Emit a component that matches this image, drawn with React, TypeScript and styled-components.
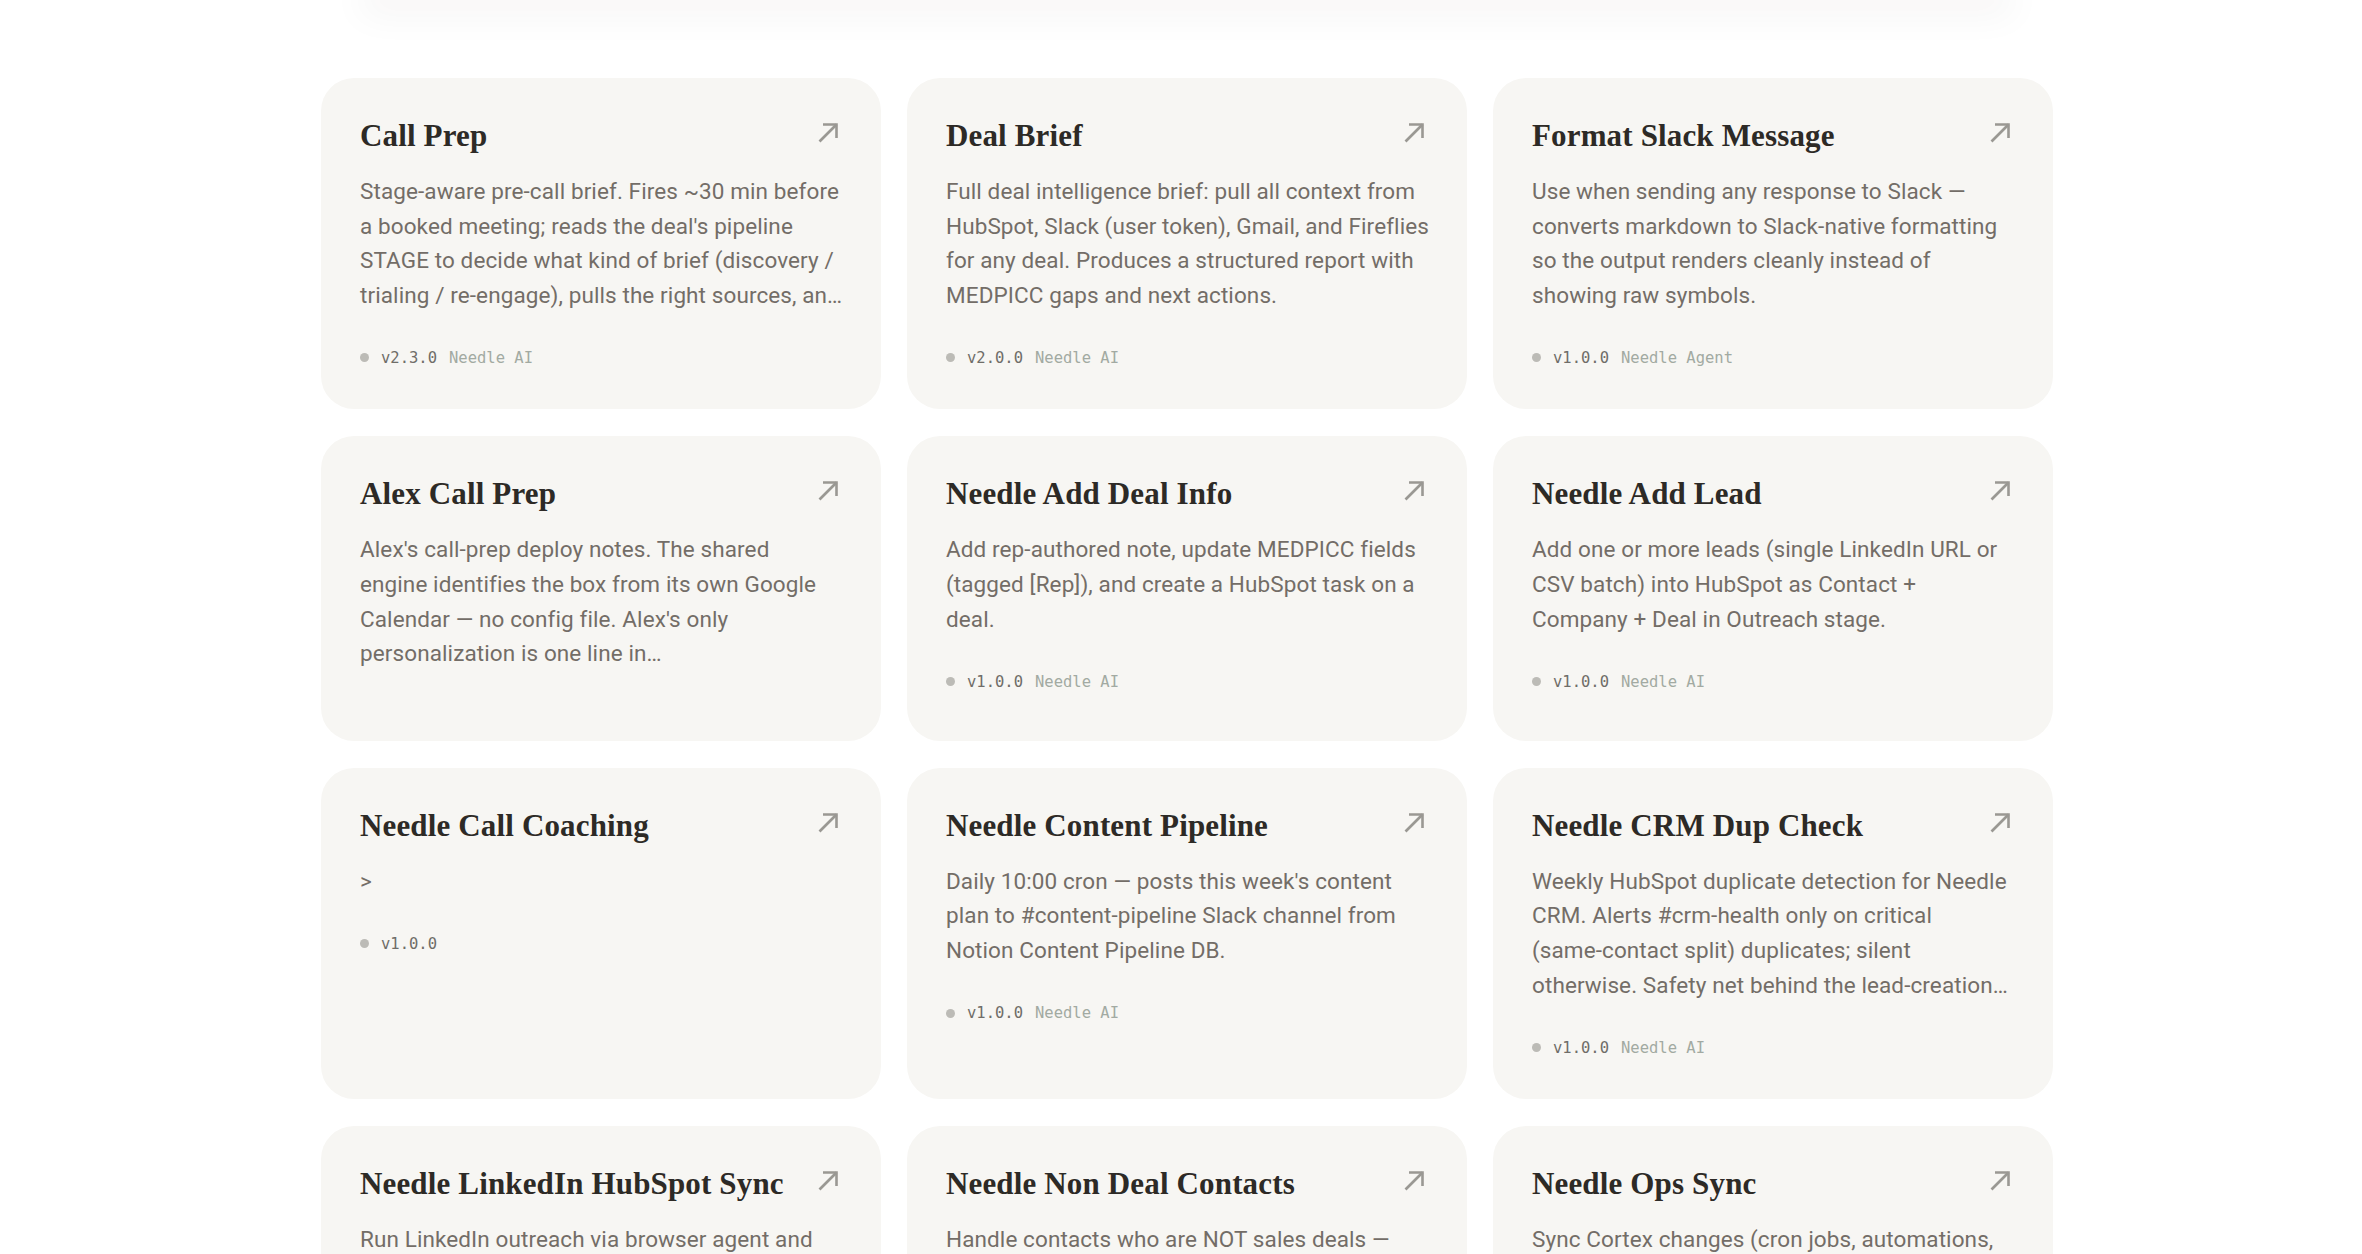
import React from "react";
import styled, { createGlobalStyle } from "styled-components";

const GlobalStyle = createGlobalStyle`
  html, body {
    margin: 0;
    padding: 0;
    background: #ffffff;
  }
  body {
    font-family: Roboto, "Liberation Sans", sans-serif;
    -webkit-font-smoothing: antialiased;
  }
`;

type Skill = {
  title: string;
  lines: string[];
  version: string;
  author?: string;
};

const skills: Skill[] = [
  {
    title: "Call Prep",
    lines: [
      "Stage-aware pre-call brief. Fires ~30 min before",
      "a booked meeting; reads the deal's pipeline",
      "STAGE to decide what kind of brief (discovery /",
      "trialing / re-engage), pulls the right sources, an…",
    ],
    version: "v2.3.0",
    author: "Needle AI",
  },
  {
    title: "Deal Brief",
    lines: [
      "Full deal intelligence brief: pull all context from",
      "HubSpot, Slack (user token), Gmail, and Fireflies",
      "for any deal. Produces a structured report with",
      "MEDPICC gaps and next actions.",
    ],
    version: "v2.0.0",
    author: "Needle AI",
  },
  {
    title: "Format Slack Message",
    lines: [
      "Use when sending any response to Slack —",
      "converts markdown to Slack-native formatting",
      "so the output renders cleanly instead of",
      "showing raw symbols.",
    ],
    version: "v1.0.0",
    author: "Needle Agent",
  },
  {
    title: "Alex Call Prep",
    lines: [
      "Alex's call-prep deploy notes. The shared",
      "engine identifies the box from its own Google",
      "Calendar — no config file. Alex's only",
      "personalization is one line in…",
    ],
    version: "",
  },
  {
    title: "Needle Add Deal Info",
    lines: [
      "Add rep-authored note, update MEDPICC fields",
      "(tagged [Rep]), and create a HubSpot task on a",
      "deal.",
    ],
    version: "v1.0.0",
    author: "Needle AI",
  },
  {
    title: "Needle Add Lead",
    lines: [
      "Add one or more leads (single LinkedIn URL or",
      "CSV batch) into HubSpot as Contact +",
      "Company + Deal in Outreach stage.",
    ],
    version: "v1.0.0",
    author: "Needle AI",
  },
  {
    title: "Needle Call Coaching",
    lines: [">"],
    version: "v1.0.0",
  },
  {
    title: "Needle Content Pipeline",
    lines: [
      "Daily 10:00 cron — posts this week's content",
      "plan to #content-pipeline Slack channel from",
      "Notion Content Pipeline DB.",
    ],
    version: "v1.0.0",
    author: "Needle AI",
  },
  {
    title: "Needle CRM Dup Check",
    lines: [
      "Weekly HubSpot duplicate detection for Needle",
      "CRM. Alerts #crm-health only on critical",
      "(same-contact split) duplicates; silent",
      "otherwise. Safety net behind the lead-creation…",
    ],
    version: "v1.0.0",
    author: "Needle AI",
  },
  {
    title: "Needle LinkedIn HubSpot Sync",
    lines: [
      "Run LinkedIn outreach via browser agent and",
      "sync every touch back to HubSpot contacts",
      "and deals.",
    ],
    version: "v1.0.0",
    author: "Needle AI",
  },
  {
    title: "Needle Non Deal Contacts",
    lines: [
      "Handle contacts who are NOT sales deals —",
      "partners, investors, candidates — without",
      "creating pipeline noise.",
    ],
    version: "v1.0.0",
    author: "Needle AI",
  },
  {
    title: "Needle Ops Sync",
    lines: [
      "Sync Cortex changes (cron jobs, automations,",
      "skills) into the shared ops log and notify",
      "the team.",
    ],
    version: "v1.0.0",
    author: "Needle AI",
  },
];

const Page = styled.div`
  display: flex;
  flex-direction: column;
  align-items: center;
  padding-left: 12px;
  min-height: 100vh;
`;

const HeaderShadow = styled.div`
  width: 1620px;
  height: 0;
  box-shadow: 0 0 36px 16px rgba(40, 30, 20, 0.045);
`;

const Grid = styled.section`
  margin-top: 78px;
  display: grid;
  grid-template-columns: repeat(3, 560px);
  column-gap: 26px;
  row-gap: 27px;
  padding-bottom: 60px;
`;

const Card = styled.a`
  display: flex;
  flex-direction: column;
  padding: 40px 39px 38px;
  border-radius: 33px;
  background: #f7f6f3;
  text-decoration: none;
  color: inherit;
  cursor: pointer;
`;

const CardHead = styled.div`
  display: flex;
  justify-content: space-between;
  align-items: flex-start;
  gap: 16px;
`;

const Title = styled.h3`
  margin: 0;
  font-family: "Liberation Serif", "DejaVu Serif", serif;
  font-weight: 700;
  font-size: 31px;
  line-height: 36px;
  color: #2d2a26;
  letter-spacing: 0.15px;
`;

const ArrowBox = styled.span`
  flex: none;
  display: flex;
  width: 24px;
  height: 24px;
  margin-top: 3px;
  color: #9a9893;
`;

const Desc = styled.p`
  margin: 20px 0 32px;
  font-family: Roboto, "Liberation Sans", sans-serif;
  font-size: 22.5px;
  letter-spacing: 0.1px;
  line-height: 34.6px;
  color: #736d67;
`;

const Line = styled.span`
  display: block;
  white-space: nowrap;
`;

const Meta = styled.div`
  display: flex;
  align-items: center;
  gap: 12px;
  height: 27px;
  font-family: "DejaVu Sans Mono", "Liberation Mono", monospace;
  font-size: 15.5px;
`;

const Dot = styled.span`
  width: 9px;
  height: 9px;
  border-radius: 50%;
  background: #bcbbb6;
`;

const Version = styled.span`
  color: #6f6d68;
`;

const Author = styled.span`
  color: #a2aaa2;
`;

const ArrowIcon = () => (
  <svg width="24" height="24" viewBox="0 0 24 24" fill="none" stroke="currentColor" strokeWidth="2.6">
    <path d="M1.5 20.5 L18.5 3.5" />
    <path d="M5 3.5 H18.5 V17" />
  </svg>
);

const SkillCard = ({ skill }: { skill: Skill }) => (
  <Card>
    <CardHead>
      <Title>{skill.title}</Title>
      <ArrowBox>
        <ArrowIcon />
      </ArrowBox>
    </CardHead>
    <Desc>
      {skill.lines.map((l, i) => (
        <Line key={i}>{l}</Line>
      ))}
    </Desc>
    {skill.version && (
      <Meta>
        <Dot />
        <Version>{skill.version}</Version>
        {skill.author && <Author>{skill.author}</Author>}
      </Meta>
    )}
  </Card>
);

export default function App() {
  return (
    <>
      <GlobalStyle />
      <Page>
        <HeaderShadow />
        <Grid>
          {skills.map((s) => (
            <SkillCard key={s.title} skill={s} />
          ))}
        </Grid>
      </Page>
    </>
  );
}
